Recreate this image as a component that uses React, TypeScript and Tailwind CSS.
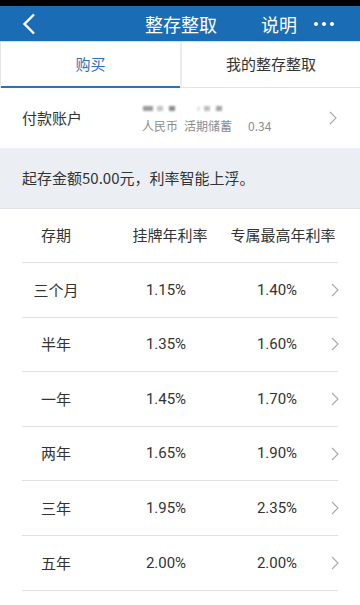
import React from 'react';

const rows = [
    { term: '三个月', listed: '1.15%', max: '1.40%' },
    { term: '半年', listed: '1.35%', max: '1.60%' },
    { term: '一年', listed: '1.45%', max: '1.70%' },
    { term: '两年', listed: '1.65%', max: '1.90%' },
    { term: '三年', listed: '1.95%', max: '2.35%' },
    { term: '五年', listed: '2.00%', max: '2.00%' }
];

function Chevron({ className = '' }: { className?: string }) {
    return (
        <svg width="8" height="14" viewBox="0 0 8 14" className={'shrink-0 ' + className}>
            <polyline points="1,1 7,7 1,13" fill="none" stroke="#a8a8a8" strokeWidth="1.1" />
        </svg>
    );
}

export default function App() {
    return (
        <div className="w-[360px] h-[605px] overflow-hidden bg-white text-[#333]" style={{ fontFamily: '"Noto Sans CJK SC", Roboto, sans-serif' }}>
            <div className="h-[6px] bg-black" />
            <div className="h-[35px] bg-[#1a6cb5] flex items-center relative text-white">
                <svg width="14" height="22" viewBox="0 0 14 22" className="ml-[22px]">
                    <polyline points="12,1.5 2.5,11 12,20.5" fill="none" stroke="white" strokeWidth="2.4" />
                </svg>
                <div className="absolute left-[145px] text-[18px] leading-none">整存整取</div>
                <div className="absolute left-[261px] text-[18px] leading-none">说明</div>
                <div className="absolute left-[314px] flex gap-[4px]">
                    <span className="w-[4px] h-[4px] rounded-full bg-white" />
                    <span className="w-[4px] h-[4px] rounded-full bg-white" />
                    <span className="w-[4px] h-[4px] rounded-full bg-white" />
                </div>
            </div>

            <div className="flex h-[47px] border-t border-[#cfe0ee]">
                <div className="w-[180px] flex flex-col border-l border-[#e6e6e6]">
                    <div className="flex-1 flex items-center justify-center text-[15px] text-[#2a73b8]">购买</div>
                    <div className="h-[2px] bg-[#2a73b8]" />
                </div>
                <div className="flex-1 flex items-center justify-center text-[15px] text-[#333] border-l-2 border-[#ececec] border-b border-b-[#e2e2e2]">
                    我的整存整取
                </div>
            </div>

            <div className="h-[60px] flex items-center px-[22px]">
                <div className="w-[115px] shrink-0 text-[15px]">付款账户</div>
                <div className="flex-1 flex flex-col pl-[5px]">
                    <div className="flex items-center gap-[4px] h-[14px] pl-[1px]">
                        <span className="w-[10px] h-[5px] bg-[#9a9a9a] blur-[1px]" />
                        <span className="w-[6px] h-[5px] bg-[#c4c4c4] blur-[1px]" />
                        <span className="w-[6px] h-[5px] bg-[#8a8a8a] blur-[1px] ml-[2px]" />
                        <span className="w-[3px] h-[4px] bg-[#e0e0e0] blur-[1px] ml-[18px]" />
                        <span className="w-[6px] h-[5px] bg-[#bdbdbd] blur-[1px]" />
                        <span className="w-[6px] h-[5px] bg-[#a3a3a3] blur-[1px] ml-[2px]" />
                    </div>
                    <div className="flex text-[12px] text-[#8c8c8c] mt-[1px]">
                        <span>人民币</span>
                        <span className="ml-[6px]">活期储蓄</span>
                        <span className="ml-[16px]">0.34</span>
                    </div>
                </div>
                <Chevron className="mr-[1px]" />
            </div>

            <div className="h-[61px] bg-[#ebeff3] border-b border-[#dfe3e7] flex items-center px-[22px] text-[15px]">
                起存金额50.00元，利率智能上浮。
            </div>

            <div className="px-[22px]">
                <div className="flex items-center h-[54px] border-b border-[#e1e1e1] text-[15px]">
                    <div className="w-[68px] shrink-0 flex justify-center">存期</div>
                    <div className="w-[160px] shrink-0 flex justify-center whitespace-nowrap">挂牌年利率</div>
                    <div className="w-[66px] shrink-0 flex justify-center whitespace-nowrap">专属最高年利率</div>
                </div>
                {rows.map((r) => (
                    <div key={r.term} className="flex items-center h-[54.6px] border-b border-[#e1e1e1] text-[15px]">
                        <div className="w-[68px] shrink-0 flex justify-center">{r.term}</div>
                        <div className="w-[152px] shrink-0 flex justify-center" style={{ fontFamily: 'Roboto, sans-serif' }}>{r.listed}</div>
                        <div className="w-[70px] shrink-0 flex justify-center" style={{ fontFamily: 'Roboto, sans-serif' }}>{r.max}</div>
                        <Chevron className="ml-[19px]" />
                    </div>
                ))}
            </div>
        </div>
    );
}
